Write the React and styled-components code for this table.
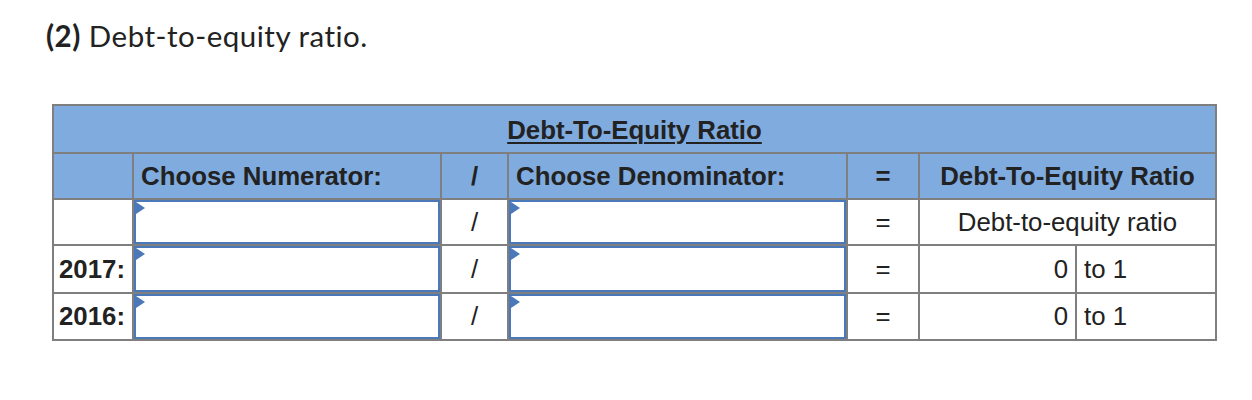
import React from 'react'
import styled, { createGlobalStyle } from 'styled-components';

const GlobalStyle = createGlobalStyle`
    body {
        margin: 0;
        background: #ffffff;
    }
`;

const Page = styled.div`
    padding: 18px 0 0 0;
    width: 1252px;
    height: 400px;
    box-sizing: border-box;
`;

const Heading = styled.h2`
    margin: 0 0 0 46px;
    font-family: "Lato", sans-serif;
    font-size: 29.5px;
    font-weight: 400;
    letter-spacing: 0.5px;
    line-height: 36px;
    color: #222222;

    b {
        font-weight: 700;
    }
`;

const Grid = styled.div`
    display: grid;
    grid-template-columns: 78px 306px 65px 337px 70px 155px 138px;
    grid-template-rows: 46px 44px 44px 46px 45px;
    gap: 2px;
    padding: 2px;
    margin: 50px 0 0 52px;
    width: max-content;
    background-color: #7f7f7f;
    font-family: "Liberation Sans", Arial, sans-serif;
    font-size: 25.8px;
    color: #222222;
`;

const Cell = styled.div`
    display: flex;
    align-items: center;
    justify-content: ${({ $align }) =>
        $align === 'right' ? 'flex-end' : $align === 'center' ? 'center' : 'flex-start'};
    padding: 0 7px;
    background-color: ${({ $head }) => ($head ? '#80abdf' : '#ffffff')};
    font-weight: ${({ $bold }) => ($bold ? 700 : 400)};
    grid-column: ${({ $span }) => ($span ? `span ${$span}` : 'auto')};
    white-space: nowrap;
    overflow: hidden;
`;

const Caption = styled(Cell)`
    grid-column: 1 / -1;
    padding-top: 2px;

    span {
        text-decoration: underline;
        text-underline-offset: 3px;
        text-decoration-thickness: 2px;
    }
`;

const InputBox = styled.div`
    position: relative;
    box-sizing: border-box;
    border: 2px solid #4a78b8;
    background-color: #ffffff;

    &::before {
        content: '';
        position: absolute;
        top: 0;
        left: 0;
        border-left: 9px solid #4a78b8;
        border-top: 6px solid transparent;
        border-bottom: 6px solid transparent;
    }
`;

const rows = [
    { label: '', result: null },
    { label: '2017:', result: ['0', 'to 1'] },
    { label: '2016:', result: ['0', 'to 1'] },
];

const App = () => {
    return (
        <Page>
            <GlobalStyle />
            <Heading><b>(2)</b> Debt-to-equity ratio.</Heading>
            <Grid>
                <Caption $head $bold $align="center"><span>Debt-To-Equity Ratio</span></Caption>

                <Cell $head />
                <Cell $head $bold>Choose Numerator:</Cell>
                <Cell $head $bold $align="center">/</Cell>
                <Cell $head $bold>Choose Denominator:</Cell>
                <Cell $head $bold $align="center">=</Cell>
                <Cell $head $bold $align="center" $span={2}>Debt-To-Equity Ratio</Cell>

                {rows.map((row, i) => (
                    <React.Fragment key={i}>
                        <Cell $bold $align="right">{row.label}</Cell>
                        <InputBox />
                        <Cell $align="center">/</Cell>
                        <InputBox />
                        <Cell $align="center">=</Cell>
                        {row.result ? (
                            <>
                                <Cell $align="right">{row.result[0]}</Cell>
                                <Cell>{row.result[1]}</Cell>
                            </>
                        ) : (
                            <Cell $align="center" $span={2}>Debt-to-equity ratio</Cell>
                        )}
                    </React.Fragment>
                ))}
            </Grid>
        </Page>
    )
}

export default App
